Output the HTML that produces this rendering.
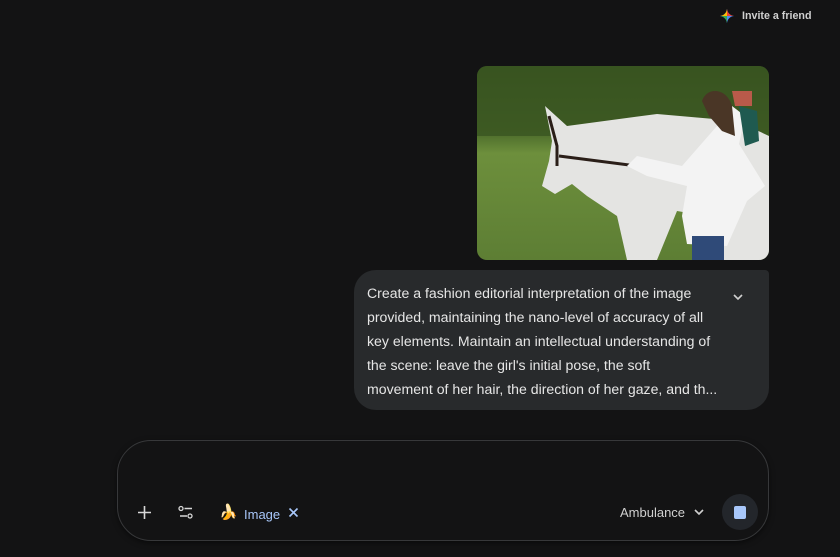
<!DOCTYPE html>
<html><head><meta charset="utf-8"><style>
html,body{margin:0;padding:0;width:840px;height:557px;background:#131314;overflow:hidden;font-family:"Liberation Sans",Arial,sans-serif;color:#e3e3e3;position:relative}
.invite{position:absolute;left:720px;top:9px;font-size:10.7px;font-weight:bold;color:#d0d0d0;display:flex;align-items:center;gap:8px}
.img{position:absolute;left:477px;top:66px;width:292px;height:194px;border-radius:10px;overflow:hidden}
.bubble{position:absolute;left:354px;top:270px;width:415px;height:140px;background:#282a2c;border-radius:22px 4px 22px 22px;box-sizing:border-box;padding:11px 0 0 13px;font-size:14.1px;line-height:24px;color:#e6e6e6}
.chev{position:absolute;left:732px;top:292px}
.input{position:absolute;left:117px;top:440px;width:652px;height:101px;box-sizing:border-box;border:1px solid #37383a;border-radius:34px;background:#131314;box-shadow:0 2px 6px rgba(0,0,0,0.5)}
.ic{position:absolute}
.lbl{position:absolute;font-size:13px}
</style></head><body>
<div class="invite"><svg width="14" height="14" viewBox="0 0 14 14"><path d="M7 0 C7.6 4 10 6.4 14 7 C10 7.6 7.6 10 7 14 C6.4 10 4 7.6 0 7 C4 6.4 6.4 4 7 0Z" fill="#4b8af5"/><path d="M7 0 C7.6 4 10 6.4 14 7 L7 7Z" fill="#ea4335"/><path d="M7 14 C6.4 10 4 7.6 0 7 L7 7Z" fill="#34a853"/><path d="M0 7 C4 6.4 6.4 4 7 0 L7 7Z" fill="#fbbc04"/></svg>Invite a friend</div>
<div class="img"><svg width="292" height="194" viewBox="0 0 292 194">
<defs><linearGradient id="g" x1="0" y1="0" x2="0" y2="1"><stop offset="0" stop-color="#3e5a22"/><stop offset="0.35" stop-color="#4e6e2c"/><stop offset="0.45" stop-color="#6d8f3c"/><stop offset="1" stop-color="#5d7e34"/></linearGradient></defs>
<rect width="292" height="194" fill="url(#g)"/>
<rect x="0" y="0" width="292" height="70" fill="#36511f" opacity="0.7"/>
<path d="M75 75 L68 40 L90 60 L180 48 L260 55 L292 70 L292 194 L240 194 L230 150 L200 145 L180 194 L150 194 L140 150 L110 130 L95 118 L78 128 L65 120 L72 95Z" fill="#e4e4e2"/>
<path d="M72 50 L80 80 L80 100 M82 90 L160 100" stroke="#2a1e18" stroke-width="3" fill="none"/>
<path d="M240 60 L255 40 L268 50 L262 78 L288 120 L270 135 L250 180 L210 178 L205 150 L210 120 L170 110 L150 100 L160 90 L205 100Z" fill="#f3f3f3"/>
<rect x="215" y="170" width="32" height="24" fill="#2f4a78"/>
<path d="M225 35 C230 20 250 22 255 40 L258 70 L245 65 L232 50Z" fill="#4a3626"/>
<path d="M262 40 L280 45 L282 75 L268 80Z" fill="#1f5a50"/>
<path d="M255 25 L275 25 L275 40 L258 40Z" fill="#b95a4a"/>
</svg></div>
<div class="bubble">Create a fashion editorial interpretation of the image<br>provided, maintaining the nano-level of accuracy of all<br>key elements. Maintain an intellectual understanding of<br>the scene: leave the girl's initial pose, the soft<br>movement of her hair, the direction of her gaze, and th...</div>
<svg class="chev" width="12" height="10" viewBox="0 0 12 10"><path d="M2 3 L6 7 L10 3" stroke="#d0d0d0" stroke-width="1.6" fill="none"/></svg>
<div class="input"></div>
<svg class="ic" style="left:137px;top:505px" width="15" height="15" viewBox="0 0 15 15"><path d="M7.5 1V14M1 7.5H14" stroke="#d8d8d8" stroke-width="1.6"/></svg>
<svg class="ic" style="left:178px;top:505px" width="16" height="15" viewBox="0 0 16 15"><circle cx="3" cy="3.5" r="2" stroke="#d8d8d8" stroke-width="1.3" fill="none"/><path d="M6.5 3.5H14M2 11H9" stroke="#d8d8d8" stroke-width="1.5"/><circle cx="12" cy="11" r="2" stroke="#d8d8d8" stroke-width="1.3" fill="none"/></svg>
<div class="lbl" style="left:219px;top:503px;font-size:15px">🍌</div>
<div class="lbl" style="left:244px;top:507px;color:#a8c7fa">Image</div>
<svg class="ic" style="left:288px;top:507px" width="11" height="11" viewBox="0 0 11 11"><path d="M1.5 1.5L9.5 9.5M9.5 1.5L1.5 9.5" stroke="#a8c7fa" stroke-width="1.6"/></svg>
<div class="lbl" style="left:620px;top:505px;color:#d0d0d0">Ambulance</div>
<svg class="ic" style="left:693px;top:507px" width="12" height="10" viewBox="0 0 12 10"><path d="M2 3 L6 7 L10 3" stroke="#d0d0d0" stroke-width="1.6" fill="none"/></svg>
<div style="position:absolute;left:722px;top:494px;width:36px;height:36px;border-radius:50%;background:#23262b"></div>
<div style="position:absolute;left:734px;top:506px;width:12px;height:13px;border-radius:2px;background:#a8c7fa"></div>
</body></html>
